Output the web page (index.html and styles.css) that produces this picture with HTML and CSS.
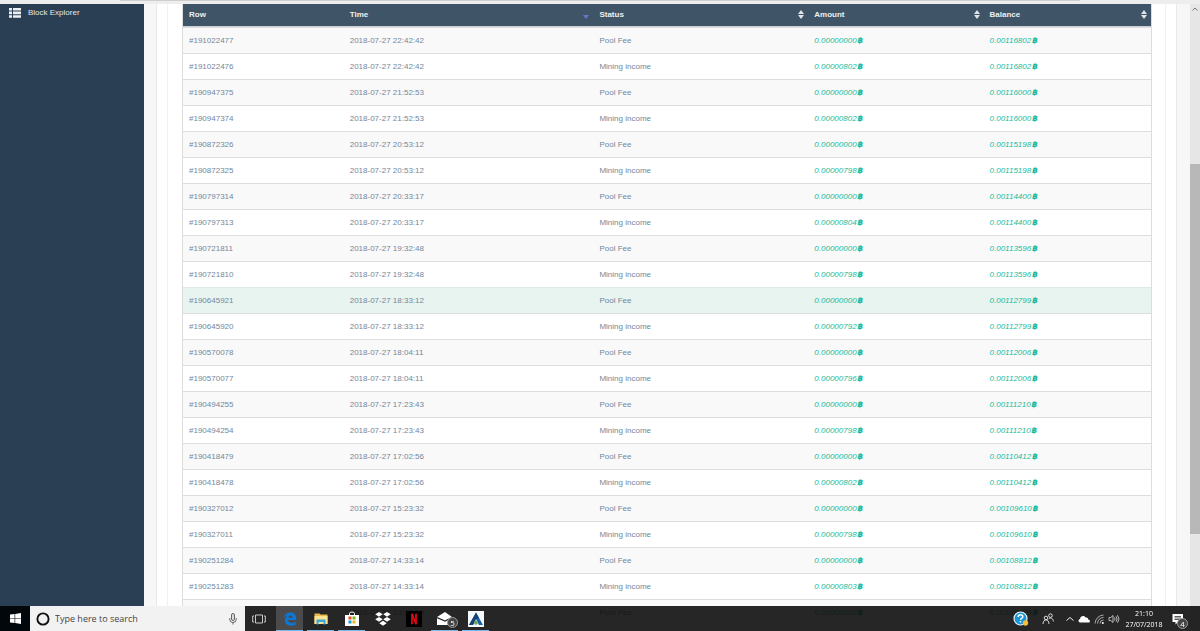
FILE: index.html
```html
<!DOCTYPE html>
<html lang="en">
<head>
<meta charset="utf-8">
<title>Transactions</title>
<link rel="stylesheet" href="styles.css">
</head>
<body>
<div class="browser-edge"><div class="browser-line"></div></div>
<div class="page">
  <nav class="sidebar">
    <a class="nav-link" href="#">
      <svg class="nav-icon" viewBox="0 0 12 10"><path fill="#eef1f4" d="M0 0h3v2.6H0zM4 0h8v2.6H4zM0 3.6h3v2.6H0zM4 3.6h8v2.6H4zM0 7.2h3v2.6H0zM4 7.2h8v2.6H4z"/></svg>
      <span>Block Explorer</span>
    </a>
  </nav>
  <main class="content">
    <section class="panel">
      <div class="panel-body">
        <table class="ledger">
          <colgroup><col class="c-row"><col class="c-time"><col class="c-status"><col class="c-amount"><col class="c-balance"></colgroup>
          <thead><tr>
            <th>Row</th><th class="sorted">Time</th><th class="sortable">Status</th><th class="sortable">Amount</th><th class="sortable">Balance</th>
          </tr></thead>
          <tbody id="rows"></tbody>
        </table>
      </div>
    </section>
  </main>
  <div class="scrollbar">
    <svg class="scroll-up" viewBox="0 0 10 10"><path d="M2.5 6.5 5 4l2.500 2.500" fill="none" stroke="#777"/></svg>
    <div class="scroll-thumb"></div>
  </div>
</div>
<footer class="taskbar">
  <button class="start" aria-label="Start"><svg class="i11" viewBox="0 0 11 11"><path fill="#fff" d="M0 1.600 4.600 1v4.200H0zM5.200.9 11 0v5.200H5.200zM0 5.800h4.600V10L0 9.400zM5.200 5.800H11V11l-5.800-.9z"/></svg></button>
  <label class="search">
    <svg class="i14" viewBox="0 0 14 14"><circle cx="7" cy="7" r="5.600" fill="none" stroke="#111" stroke-width="1.900"/></svg>
    <input type="text" placeholder="Type here to search" aria-label="Type here to search">
    <svg class="mic" viewBox="0 0 8 12"><rect x="2.500" y=".5" width="3" height="7" rx="1.500" fill="#ddd" stroke="#444" stroke-width=".8"/><path d="M.8 5v1.500a3.200 3 0 0 0 6.400 0V5M4 9.500v2" fill="none" stroke="#444" stroke-width=".8"/></svg>
  </label>
  <div class="apps">
    <button class="app" aria-label="Task view"><svg class="i14" viewBox="0 0 14 14"><path d="M3.500 3h7v8h-7zM2 4H.7v6H2M12 4h1.300v6H12" fill="none" stroke="#ddd" stroke-width=".9"/></svg></button>
    <button class="app open active" aria-label="Edge"><svg class="i14" viewBox="0 0 14 14"><path fill="#0b78d8" d="M.7 6.400C1.400 2.400 4 .4 7.300.4c3.800 0 6 2.600 6 6v1.700H5c.1 2.100 1.800 3 3.900 3 1.400 0 2.700-.4 3.700-1v2.700c-1.200.6-2.700.9-4.300.9C4.600 13.700 2 11.800 2 8.500c0-2.200 1.200-4 3.100-5C3.300 3.800 1.700 4.800.7 6.400zM5.100 5.800h4.600c0-1.500-.8-2.400-2.200-2.400S5.300 4.400 5.100 5.800z"/></svg></button>
    <button class="app open" aria-label="File Explorer"><svg class="i14" viewBox="0 0 14 14"><path fill="#e9b94f" d="M.5 1.500h5l1 1h7V12H.5z"/><path fill="#fbe391" d="M.5 4h13v8H.5z"/><path fill="#3ba5dc" d="M2.500 7.500h9v5h-2v-2.500h-5v2.500h-2z"/></svg></button>
    <button class="app open" aria-label="Store"><svg class="i16" viewBox="0 0 16 16"><path d="M5.500 4V2.500q0-1.500 2.500-1.500t2.500 1.500V4" fill="none" stroke="#fff"/><path fill="#fff" d="M1 4h14v11H1z"/><path fill="#e64b25" d="M4.500 5.500h3v3h-3z"/><path fill="#7ab51d" d="M8.500 5.500h3v3h-3z"/><path fill="#159edb" d="M4.500 9.500h3v3h-3z"/><path fill="#f4b51c" d="M8.500 9.500h3v3h-3z"/></svg></button>
    <button class="app" aria-label="Dropbox"><svg class="i16" viewBox="0 0 14 14"><path fill="#fff" d="m3.500.8 3.300 2.100-3.300 2.200L.2 2.900zM10.500.8l3.300 2.100-3.300 2.200-3.300-2.200zM3.500 5.200l3.300 2.100-3.300 2.200L.2 7.300zM10.500 5.200l3.300 2.100-3.300 2.200-3.300-2.200zM7 8.500l3.200 2.200L7 12.900l-3.200-2.200z"/></svg></button>
    <button class="app" aria-label="Netflix"><svg class="i16" viewBox="0 0 14 14"><path fill="#000" d="M0 0h14v14H0z"/><path fill="#e50914" d="M4.500 2.500h1.500v9H4.500zM8 2.500h1.500v9H8z"/><path fill="#e50914" d="M4.500 2.500h1.500l3.500 9H8z"/></svg></button>
    <button class="app open" aria-label="Mail"><svg class="i16" viewBox="0 0 16 16"><path fill="#fff" d="M0 6 8 1l7 5v8H0z"/><path fill="none" stroke="#222" stroke-width="1.200" d="m0 6.500 8 3.500 7-3.500"/></svg><span class="badge">5</span></button>
    <button class="app open" aria-label="Mining app"><svg class="i16" viewBox="0 0 16 16"><path fill="#f4f8fb" d="M0 0h16v16H0z"/><path fill="#1763a8" d="M8 1.500 15 14h-4L8 8l-3 6H1z"/><path fill="#174079" d="M8 1.500 11 7 8 8 5 14H1z"/><circle cx="8" cy="11.800" r="2" fill="#70a75a"/></svg></button>
  </div>
  <div class="tray">
    <svg class="help" viewBox="0 0 16 16"><circle cx="7.500" cy="7.500" r="6.500" fill="#1795d4" stroke="#e8f4fa" stroke-width="1.200"/><path d="M5.200 6q0-2.300 2.300-2.300T9.800 5.800c0 1.500-2.300 1.500-2.300 3M7.500 10v1.500" fill="none" stroke="#fff" stroke-width="1.500"/><circle cx="12.500" cy="12" r="2.700" fill="#f5bd35"/></svg>
    <svg class="people" viewBox="0 0 12 12"><g fill="none" stroke="#eee" stroke-width=".9"><circle cx="4" cy="5" r="1.800"/><path d="M1 11c0-5.500 6-5.500 6 0"/><circle cx="8.500" cy="2.600" r="1.800"/><path d="M6.800 6c2-2 4.500-.5 4.500 2.500"/></g></svg>
    <svg class="i10" viewBox="0 0 10 10"><path d="m1.500 6.500 3.500-3 3.500 3" fill="none" stroke="#eee"/></svg>
    <svg class="i12" viewBox="0 0 12 12"><path fill="#fff" d="M2 9.500C0 9 0 6.500 2 6 2.300 2.500 6.500 2 7.700 4.600c1.700-.3 2.500.7 2.500 2 2.200.2 2.200 2.900.3 2.900z"/></svg>
    <svg class="i12" viewBox="0 0 12 12"><g fill="none" stroke="#ccc" stroke-width=".8"><path d="M2 10.500A9 9 0 0 1 10.500 2M4.500 10.500a6 6 0 0 1 6-6M7 10.500a3.500 3.500 0 0 1 3.500-3.500"/></g><circle cx="9.800" cy="10" r="1" fill="#fff"/></svg>
    <svg class="i12" viewBox="0 0 12 12"><path d="M1 4.500h1.800L5 2.500v7l-2.200-2H1zM6.500 4.500q1.200 1.500 0 3M8 3.300q2.200 2.700 0 5.400M9.500 2.200q3 3.800 0 7.600" fill="none" stroke="#ddd" stroke-width=".8"/></svg>
    <div class="clock"><span>21:10</span><span>27/07/2018</span></div>
    <button class="notify" aria-label="Notifications"><svg class="i12" viewBox="0 0 12 12"><path fill="#fff" d="M.5 1h10.500v8H6l-2.500 2.500V9h-3z"/><path stroke="#333" stroke-width=".8" d="M2.500 3.500H9M2.500 5H9M2.500 6.500H9"/></svg><span class="badge">4</span></button>
  </div>
</footer>
<script src="app.js"></script>
</body>
</html>
```
FILE: styles.css
```css
* { box-sizing: border-box; }
body {
  margin: 0;
  height: 100vh;
  overflow: hidden;
  display: flex;
  flex-direction: column;
  background: #f7f7f7;
  font: 8px/12px "Liberation Sans", Arial, sans-serif;
  color: #73879c;
}
button { border: 0; padding: 0; background: none; color: inherit; font: inherit; }
svg { display: block; flex: none; }

.browser-edge { flex: none; height: 4px; background: #ededed; padding: 0 10% 0 10%; }
.browser-line { height: 1px; background: #cfcfcf; }

.page { flex: 1; min-height: 0; display: flex; overflow: hidden; }
.sidebar { flex: none; width: 144px; background: #2a3f54; padding: 3px 9px; }
.nav-link { display: flex; align-items: center; gap: 7px; color: #e7e7e7; text-decoration: none; }
.nav-icon { width: 12px; height: 10px; }
.content { flex: 1; min-width: 0; padding: 0 13px 0 12px; }
.panel { background: #fff; border: solid #e6e9ed; border-width: 0 1px; padding: 0 10px; min-height: 100%; }
.panel-body { border: solid #f1f1f1; border-width: 0 1px; padding: 0 13px 0 14px; }

.ledger { width: 100%; table-layout: fixed; border-collapse: separate; border-spacing: 0; border: solid #ddd; border-width: 0 1px; }
.c-row { width: 16.6%; }
.c-time { width: 25.8%; }
.c-status { width: 22.2%; }
.c-amount { width: 18.1%; }
.c-balance { width: 17.3%; }
.ledger th { position: relative; height: 23px; padding: 0 6px 1px; text-align: left; color: #ecf0f1; background: #405467; border-bottom: 1px solid #c9ced3; }
.ledger td { height: 26px; padding: 0 6px; border-top: 1px solid #ddd; white-space: nowrap; }
.ledger tbody tr:nth-child(odd) { background: #f9f9f9; }
.ledger tbody tr.hovered { background: #e8f4f0; }
.ledger tr.hovered td { border-color: #e0eae7; }
.money { color: #1abb9c; font-style: italic; }
.coin { margin-left: 1px; font: italic bold 8px/8px "DejaVu Sans", sans-serif; }
.sortable::before, .sortable::after, .sorted::after { content: ""; position: absolute; right: 4px; border: solid transparent; border-width: 0 3px; }
.sortable::before { top: 6px; border-bottom: 4px solid #dfe4e8; }
.sortable::after { top: 11px; border-top: 4px solid #dfe4e8; }
.sorted::after { top: 11px; border-top: 4px solid #6478c8; }

.scrollbar { flex: none; width: 10px; background: #e6e6e6; }
.scroll-up { width: 10px; height: 10px; }
.scroll-thumb { height: 59%; margin-top: 150px; background: #b8b8b8; }

.taskbar { position: fixed; left: 0; right: 0; bottom: 0; height: 25px; display: flex; background: rgba(14, 14, 14, .9); color: #fff; font-family: "Open Sans", "Noto Sans", sans-serif; }
.start { width: 30px; background: #02070b; display: flex; align-items: center; justify-content: center; }
.search { width: 215px; display: flex; align-items: center; gap: 5px; padding: 0 8px 0 6px; background: #f2f2f2; }
.search input { flex: 1; min-width: 0; border: 0; padding: 0; background: none; font: 9px/14px "Open Sans", "Noto Sans", sans-serif; color: #444; }
.search input::placeholder { color: #444; opacity: 1; }
.mic { width: 8px; height: 12px; }
.apps { display: flex; gap: 4px; }
.app { position: relative; width: 27px; display: flex; align-items: center; justify-content: center; border: solid transparent; border-width: 1px 0; }
.open { border-bottom-color: #76b9ed; }
.active { background: #4b4b4b; }
.badge { position: absolute; right: 0; bottom: 2px; width: 11px; height: 11px; border: 1px solid #999; border-radius: 50%; background: #444; color: #fff; font: 8px/9px "Open Sans", "Noto Sans", sans-serif; text-align: center; }
.i10 { width: 10px; height: 10px; }
.i11 { width: 11px; height: 11px; }
.i12 { width: 12px; height: 12px; }
.i14 { width: 14px; height: 14px; }
.i16 { width: 16px; height: 16px; }
.tray { margin-left: auto; display: flex; align-items: center; gap: 3px; padding-right: 12px; }
.help { width: 16px; height: 16px; margin-right: 10px; }
.people { width: 12px; height: 12px; margin-right: 8px; }
.clock { display: flex; flex-direction: column; align-items: center; width: 42px; font-size: 7px; line-height: 11px; }
.notify { position: relative; width: 20px; height: 25px; padding-left: 4px; display: flex; align-items: center; }
```
FILE: app.js
```js
const entries = [
  ["191022477", "22:42:42", "0.00000000", "0.00116802"],
  ["191022476", "22:42:42", "0.00000802", "0.00116802"],
  ["190947375", "21:52:53", "0.00000000", "0.00116000"],
  ["190947374", "21:52:53", "0.00000802", "0.00116000"],
  ["190872326", "20:53:12", "0.00000000", "0.00115198"],
  ["190872325", "20:53:12", "0.00000798", "0.00115198"],
  ["190797314", "20:33:17", "0.00000000", "0.00114400"],
  ["190797313", "20:33:17", "0.00000804", "0.00114400"],
  ["190721811", "19:32:48", "0.00000000", "0.00113596"],
  ["190721810", "19:32:48", "0.00000798", "0.00113596"],
  ["190645921", "18:33:12", "0.00000000", "0.00112799"],
  ["190645920", "18:33:12", "0.00000792", "0.00112799"],
  ["190570078", "18:04:11", "0.00000000", "0.00112006"],
  ["190570077", "18:04:11", "0.00000796", "0.00112006"],
  ["190494255", "17:23:43", "0.00000000", "0.00111210"],
  ["190494254", "17:23:43", "0.00000798", "0.00111210"],
  ["190418479", "17:02:56", "0.00000000", "0.00110412"],
  ["190418478", "17:02:56", "0.00000802", "0.00110412"],
  ["190327012", "15:23:32", "0.00000000", "0.00109610"],
  ["190327011", "15:23:32", "0.00000798", "0.00109610"],
  ["190251284", "14:33:14", "0.00000000", "0.00108812"],
  ["190251283", "14:33:14", "0.00000803", "0.00108812"],
  ["190176009", "13:17:10", "0.00000000", "0.00108009"]
];
const money = v => `<td class="money">${v}<span class="coin">฿</span></td>`;
document.getElementById("rows").innerHTML = entries.map(([id, time, amount, balance], i) =>
  `<tr${i === 10 ? ' class="hovered"' : ""}><td>#${id}</td><td>2018-07-27 ${time}</td><td>${i % 2 ? "Mining income" : "Pool Fee"}</td>${money(amount)}${money(balance)}</tr>`
).join("");
```
